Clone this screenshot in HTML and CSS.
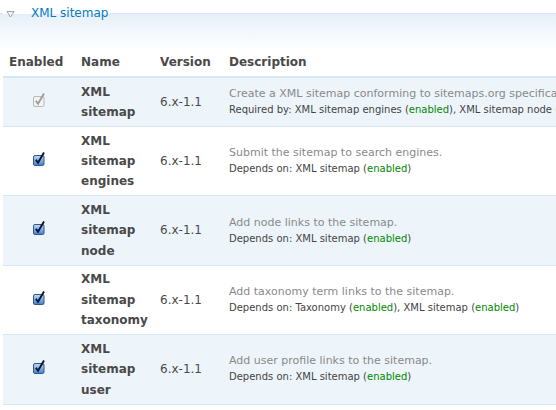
FILE: index.html
```html
<!DOCTYPE html>
<html>
<head>
<meta charset="utf-8">
<link rel="stylesheet" href="styles.css">
</head>
<body>
<fieldset class="fs">
  <legend class="fs-legend"><a class="fs-toggle" href="#"><svg class="tri" width="9" height="8" viewBox="0 0 9 8"><path d="M1 1.5 L8 1.5 L4.5 7 Z" fill="#f5f8fb" stroke="#a3a3a3" stroke-width="1" stroke-linejoin="round"/></svg><span class="fs-title">XML sitemap</span></a></legend>
  <table class="modules">
    <colgroup>
      <col class="c-en"><col class="c-name"><col class="c-ver"><col class="c-desc">
    </colgroup>
    <thead>
      <tr><th>Enabled</th><th>Name</th><th>Version</th><th>Description</th></tr>
    </thead>
    <tbody>
      <tr class="odd">
        <td class="en"><svg class="cb" width="14" height="16" viewBox="0 0 14 16"><rect x="1.5" y="5.5" width="10.5" height="10" rx="1.5" fill="#f3f3f3" stroke="#b8b8b8"/><path d="M3.8 9.8 L6 12.8 L12 2.5" fill="none" stroke="#9c9c9c" stroke-width="1.8"/></svg></td>
        <td class="name">XML sitemap</td>
        <td class="ver">6.x-1.1</td>
        <td class="desc"><div class="d-text">Create a XML sitemap conforming to sitemaps.org specification.</div><div class="d-req">Required by: XML sitemap engines (<span class="ok">enabled</span>), XML sitemap node (<span class="ok">enabled</span>), XML sitemap taxonomy (<span class="ok">enabled</span>), XML sitemap user (<span class="ok">enabled</span>)</div></td>
      </tr>
      <tr class="even">
        <td class="en"><svg class="cb" width="14" height="16" viewBox="0 0 14 16"><defs><linearGradient id="g1" x1="0" y1="0" x2="0" y2="1"><stop offset="0" stop-color="#c2dbf7"/><stop offset="1" stop-color="#3b7fd8"/></linearGradient></defs><rect x="1.5" y="5.5" width="10.5" height="10" rx="1.5" fill="url(#g1)" stroke="#34568c"/><path d="M3.8 9.8 L6 12.8 L12 2.5" fill="none" stroke="#0c1424" stroke-width="1.9"/></svg></td>
        <td class="name">XML sitemap engines</td>
        <td class="ver">6.x-1.1</td>
        <td class="desc"><div class="d-text">Submit the sitemap to search engines.</div><div class="d-req">Depends on: XML sitemap (<span class="ok">enabled</span>)</div></td>
      </tr>
      <tr class="odd">
        <td class="en"><svg class="cb" width="14" height="16" viewBox="0 0 14 16"><defs><linearGradient id="g2" x1="0" y1="0" x2="0" y2="1"><stop offset="0" stop-color="#c2dbf7"/><stop offset="1" stop-color="#3b7fd8"/></linearGradient></defs><rect x="1.5" y="5.5" width="10.5" height="10" rx="1.5" fill="url(#g2)" stroke="#34568c"/><path d="M3.8 9.8 L6 12.8 L12 2.5" fill="none" stroke="#0c1424" stroke-width="1.9"/></svg></td>
        <td class="name">XML sitemap node</td>
        <td class="ver">6.x-1.1</td>
        <td class="desc"><div class="d-text">Add node links to the sitemap.</div><div class="d-req">Depends on: XML sitemap (<span class="ok">enabled</span>)</div></td>
      </tr>
      <tr class="even">
        <td class="en"><svg class="cb" width="14" height="16" viewBox="0 0 14 16"><defs><linearGradient id="g3" x1="0" y1="0" x2="0" y2="1"><stop offset="0" stop-color="#c2dbf7"/><stop offset="1" stop-color="#3b7fd8"/></linearGradient></defs><rect x="1.5" y="5.5" width="10.5" height="10" rx="1.5" fill="url(#g3)" stroke="#34568c"/><path d="M3.8 9.8 L6 12.8 L12 2.5" fill="none" stroke="#0c1424" stroke-width="1.9"/></svg></td>
        <td class="name">XML sitemap taxonomy</td>
        <td class="ver">6.x-1.1</td>
        <td class="desc"><div class="d-text">Add taxonomy term links to the sitemap.</div><div class="d-req">Depends on: Taxonomy (<span class="ok">enabled</span>), XML sitemap (<span class="ok">enabled</span>)</div></td>
      </tr>
      <tr class="odd">
        <td class="en"><svg class="cb" width="14" height="16" viewBox="0 0 14 16"><defs><linearGradient id="g4" x1="0" y1="0" x2="0" y2="1"><stop offset="0" stop-color="#c2dbf7"/><stop offset="1" stop-color="#3b7fd8"/></linearGradient></defs><rect x="1.5" y="5.5" width="10.5" height="10" rx="1.5" fill="url(#g4)" stroke="#34568c"/><path d="M3.8 9.8 L6 12.8 L12 2.5" fill="none" stroke="#0c1424" stroke-width="1.9"/></svg></td>
        <td class="name">XML sitemap user</td>
        <td class="ver">6.x-1.1</td>
        <td class="desc"><div class="d-text">Add user profile links to the sitemap.</div><div class="d-req">Depends on: XML sitemap (<span class="ok">enabled</span>)</div></td>
      </tr>
    </tbody>
  </table>
</fieldset>
</body>
</html>
```
FILE: styles.css
```css
html, body {
  margin: 0;
  padding: 0;
  overflow: hidden;
  background: #fff;
}
body {
  font-family: "DejaVu Sans", Verdana, sans-serif;
  font-size: 12px;
  line-height: 20.4px;
  color: #494949;
}
.fs {
  margin: 3px 0 0 0;
  padding: 0 0 0 3px;
  border: 0;
  border-top: 1px solid #d6e6f4;
  width: 1100px;
  background: linear-gradient(#e6eff9 0, #f3f8fc 18px, #fff 36px) no-repeat;
}
.fs-legend {
  padding: 0 2px 0 3px;
  margin: 0;
}
.fs-toggle {
  display: flex;
  align-items: center;
  color: #027ac6;
  text-decoration: none;
}
.tri {
  display: block;
  margin-right: 16px;
  margin-top: 1px;
}
.modules {
  border-collapse: collapse;
  table-layout: fixed;
  width: 1090px;
  margin-top: 25px;
}
.c-en { width: 72px; }
.c-name { width: 79px; }
.c-ver { width: 69px; }
.modules th {
  text-align: left;
  font-weight: bold;
  color: #494949;
  padding: 3.6px 6px;
  border-bottom: 2px solid #d3e7f4;
}
.modules tbody tr {
  border-top: 1px solid #d3e7f4;
  border-bottom: 1px solid #d3e7f4;
}
.modules tr.odd { background: #edf5fa; }
.modules tr.even { background: #fff; }
.modules td {
  padding: 3.6px 6px;
  vertical-align: middle;
}
.en { text-align: center; }
.cb { display: inline-block; vertical-align: baseline; }
.name { font-weight: bold; }
.desc { white-space: nowrap; }
.d-text {
  font-size: 11px;
  line-height: 16px;
  color: #898989;
}
.d-req {
  font-size: 10px;
  line-height: 16px;
  color: #444;
}
.ok { color: #080; }
```
